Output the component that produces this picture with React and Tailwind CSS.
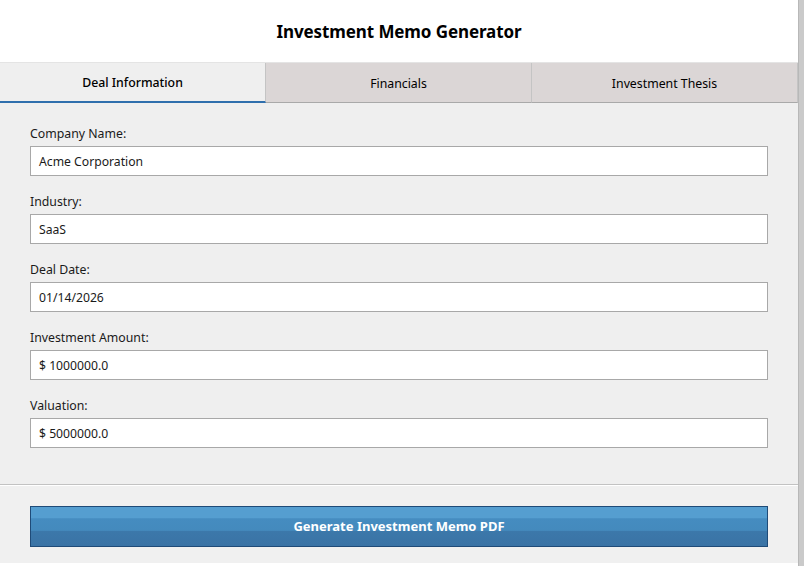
const TABS = ['Deal Information', 'Financials', 'Investment Thesis']

const FIELDS = [
  { label: 'Company Name:', value: 'Acme Corporation' },
  { label: 'Industry:', value: 'SaaS' },
  { label: 'Deal Date:', value: '01/14/2026' },
  { label: 'Investment Amount:', value: '$ 1000000.0' },
  { label: 'Valuation:', value: '$ 5000000.0' },
]

export default function App() {
  return (
    <div
      className="w-[804px] h-[566px] flex bg-white text-black overflow-hidden"
      style={{ fontFamily: '"Noto Sans", "Open Sans", sans-serif' }}
    >
      <div className="w-[798px] flex flex-col">
        {/* Header */}
        <div className="h-[63px] bg-white flex items-center justify-center border-b border-[#e4e4e4]">
          <h1 className="text-[17px] font-bold tracking-[-0.1px] pt-[1px]">Investment Memo Generator</h1>
        </div>

        {/* Tabs */}
        <div className="h-[40px] flex">
          {TABS.map((t, i) => (
            <div
              key={t}
              className={
                i === 0
                  ? 'flex-1 flex items-center justify-center pt-[3px] bg-[#efefef] text-[12.3px] font-medium border-b-2 border-[#2f6fad] border-r border-r-[#c4c4c4]'
                  : 'flex-1 flex items-center justify-center pt-[3px] bg-[#dbd6d6] text-[12.3px] border-b border-[#a9a9a9] border-r border-r-[#c4c4c4]'
              }
            >
              {t}
            </div>
          ))}
        </div>

        {/* Form */}
        <div className="bg-[#efefef] px-[30px] pt-[21px] pb-[36px] flex flex-col gap-4 border-b border-[#c2c2c2]">
          {FIELDS.map((f) => (
            <div key={f.label} className="flex flex-col gap-1">
              <label className="text-[12.3px] leading-[18px] pt-[1px] -mb-[1px] text-[#1a1a1a]">{f.label}</label>
              <div className="h-[30px] bg-white border border-[#a8a8a8] flex items-center px-[8px] pt-[2px] text-[12.2px] text-[#1a1a1a]">
                {f.value}
              </div>
            </div>
          ))}
        </div>

        {/* Footer */}
        <div className="flex-1 bg-[#f0f0f0] px-[30px] pt-[20px] border-t border-white">
          <button
            className="w-full h-[41px] border border-[#1f4b78] text-white text-[13px] font-bold flex items-center justify-center"
            style={{ background: 'linear-gradient(#559ed0 0%, #559ed0 28%, #458cc0 30%, #448abd 60%, #3c78aa 62%, #3a73a5 100%)' }}
          >
            Generate Investment Memo PDF
          </button>
        </div>
        <div className="h-[3px] bg-white" />
      </div>
      <div className="flex-1 bg-[#cacaca] border-l border-[#b8b8b8]" />
    </div>
  )
}
